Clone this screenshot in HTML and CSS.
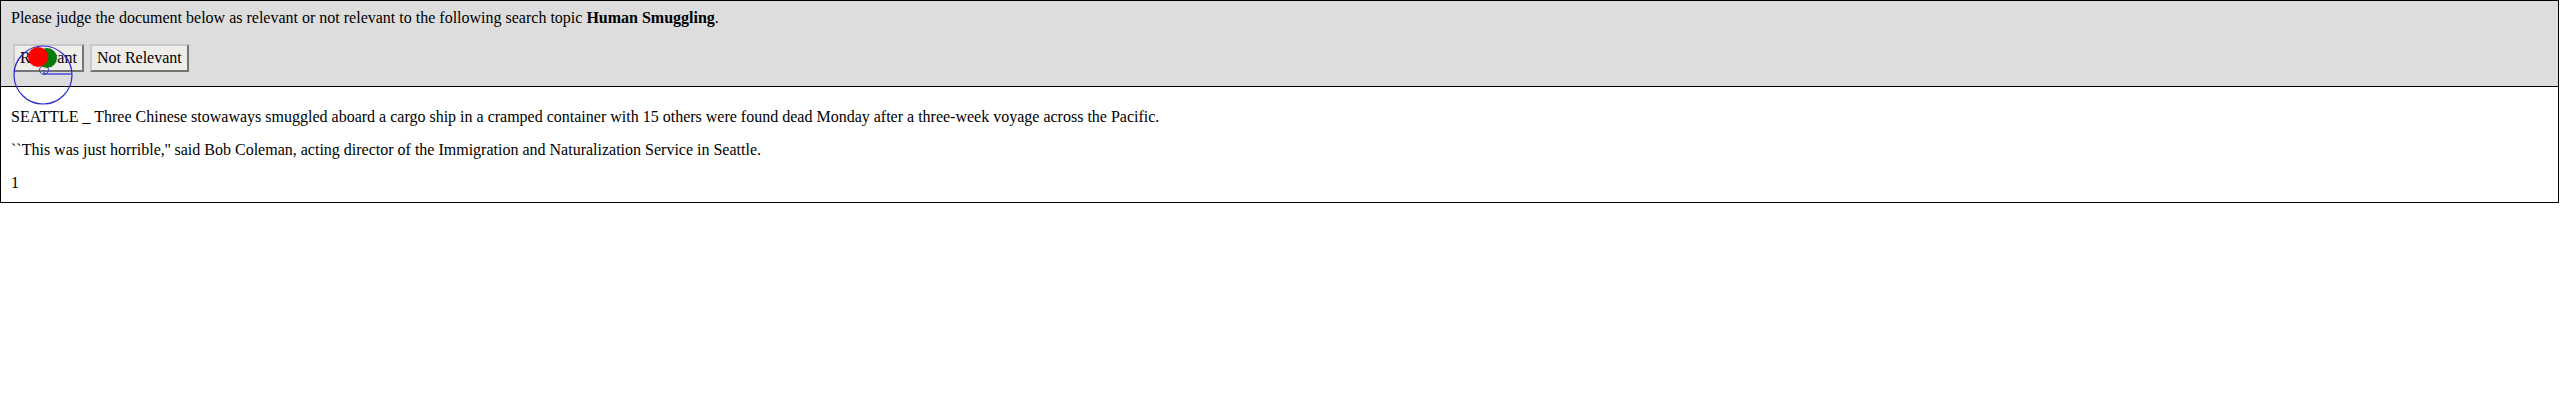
FILE: index.html
```html
<!DOCTYPE html>
<html>
<head>
<meta charset="utf-8">
<link rel="stylesheet" href="styles.css">
</head>
<body>
<div class="frame">
  <div class="judge">
    <div class="prompt">Please judge the document below as relevant or not relevant to the following search topic <b>Human Smuggling</b>.</div>
    <div class="actions">
      <button class="btn">Relevant</button>
      <button class="btn">Not Relevant</button>
    </div>
  </div>
  <div class="doc">
    <p>SEATTLE _ Three Chinese stowaways smuggled aboard a cargo ship in a cramped container with 15 others were found dead Monday after a three-week voyage across the Pacific.</p>
    <p>``This was just horrible,'' said Bob Coleman, acting director of the Immigration and Naturalization Service in Seattle.</p>
    <p class="last">1</p>
  </div>
  <svg class="gaze" width="90" height="110" viewBox="0 0 90 110">
    <circle cx="42" cy="74" r="29" fill="none" stroke="#2a2ad0" stroke-width="1.2"/>
    <polyline points="43,69 43,73 71,73" fill="none" stroke="#4a4ae0" stroke-width="1.5"/>
    <circle cx="43" cy="69" r="4.5" fill="none" stroke="#3a3ad8" stroke-width="1"/>
    <circle cx="46" cy="57" r="10" fill="#0a7a0a"/>
    <circle cx="37" cy="56" r="10" fill="#ff0000"/>
  </svg>
</div>
</body>
</html>
```
FILE: styles.css
```css
html, body {
  margin: 0;
  padding: 0;
  background: #ffffff;
}
body {
  font-family: "Liberation Serif", "Times New Roman", serif;
  font-size: 16px;
  color: #000;
}
.frame {
  position: relative;
  box-sizing: border-box;
  width: calc(100% - 1px);
  border: 1px solid #000;
}
.judge {
  background: #dddddd;
  border-bottom: 1px solid #000;
  padding: 8px 10px 14px;
}
.prompt {
  line-height: 18px;
}
.actions {
  display: flex;
  gap: 6px;
  margin-top: 17px;
  padding-left: 2px;
}
.btn {
  font-family: "Liberation Serif", "Times New Roman", serif;
  font-size: 16px;
  color: #000;
  background: #efedea;
  border: 2px outset #c8c8c8;
  padding: 2px 5px 3px;
  height: 28px;
  margin: 0;
}
.doc {
  padding: 5px 10px 0;
}
.doc p {
  margin: 16px 0;
  line-height: 17px;
}
.doc p.last {
  margin-bottom: 11px;
}
.gaze {
  position: absolute;
  left: 0;
  top: 0;
  pointer-events: none;
}
```
